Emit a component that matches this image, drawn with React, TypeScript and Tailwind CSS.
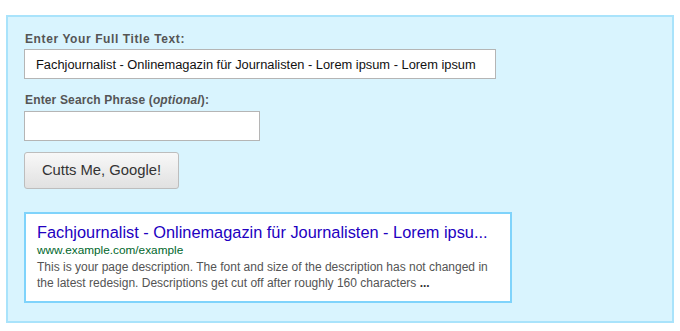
export default function App() {
  return (
    <div className="bg-white w-[680px] h-[331px] pt-[15px] pl-[6px] font-['Liberation_Sans',Arial,sans-serif]">
      <div className="w-[668px] h-[308px] bg-[#d9f4fe] border-2 border-[#a9e3fb] pl-[16px] pt-[15px]">
        <label className="block text-[12px] leading-[15px] font-bold text-[#555] pl-px tracking-[0.6px]">
          Enter Your Full Title Text:
        </label>
        <input
          readOnly
          value="Fachjournalist - Onlinemagazin für Journalisten - Lorem ipsum - Lorem ipsum"
          className="block mt-[2px] w-[472px] h-[30px] bg-white border border-[#b5b5b5] px-[11px] text-[12.85px] text-[#111] outline-none"
        />
        <label className="block mt-[14px] text-[12px] leading-[15px] font-bold text-[#555] pl-px tracking-[0.15px]">
          Enter Search Phrase (<em>optional</em>):
        </label>
        <input
          readOnly
          value=""
          className="block mt-[3px] w-[236px] h-[30px] bg-white border border-[#b5b5b5] px-[11px] text-[13px] outline-none"
        />
        <button className="block mt-[11px] w-[155px] h-[37px] rounded-[3px] border border-[#bdbdbd] bg-gradient-to-b from-[#f8f8f8] to-[#e1e1e1] text-[14.8px] text-[#333]">
          Cutts Me, Google!
        </button>
        <div className="mt-[23px] w-[488px] h-[91px] bg-white border-2 border-[#7fd3fb] pl-[11px] pt-[9px]">
          <div className="text-[16.35px] leading-[19px] text-[#2200c1] whitespace-nowrap">
            Fachjournalist - Onlinemagazin für Journalisten - Lorem ipsu...
          </div>
          <div className="mt-px text-[11.8px] leading-[15px] text-[#00662b]">www.example.com/example</div>
          <div className="w-[460px] mt-px text-[12px] leading-[16px] text-[#545454]">
            This is your page description. The font and size of the description has not changed in the latest
            redesign. Descriptions get cut off after roughly 160 characters <b className="text-[#333]">...</b>
          </div>
        </div>
      </div>
    </div>
  );
}
